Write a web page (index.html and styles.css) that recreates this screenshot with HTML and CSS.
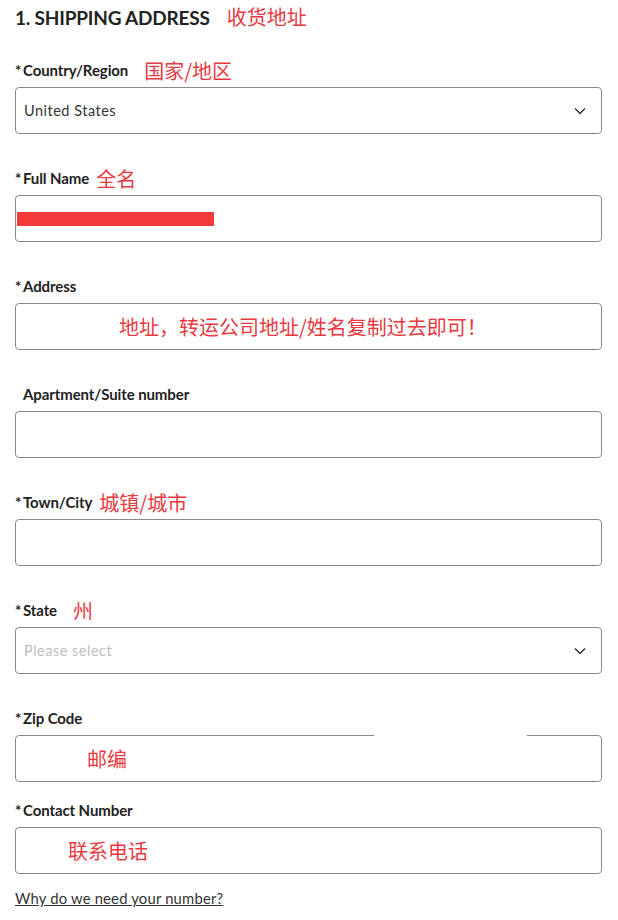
FILE: index.html
```html
<!DOCTYPE html>
<html>
<head>
<meta charset="utf-8">
<link rel="stylesheet" href="styles.css">
</head>
<body>
<div class="form">
  <div class="heading-row">
    <h2 class="heading">1. SHIPPING ADDRESS</h2>
    <span class="note note-head">收货地址</span>
  </div>

  <div class="field">
    <div class="label-row"><span class="label"><span class="star">*</span>Country/Region</span><span class="note note-country">国家/地区</span></div>
    <div class="box select"><span class="value">United States</span>
      <svg class="chev" width="12" height="8" viewBox="0 0 12 8"><path d="M1 1.5 L6 6.5 L11 1.5" fill="none" stroke="#333" stroke-width="1.5"/></svg>
    </div>
  </div>

  <div class="field">
    <div class="label-row"><span class="label"><span class="star">*</span>Full Name</span><span class="note note-name">全名</span></div>
    <div class="box"><span class="redact"></span></div>
  </div>

  <div class="field">
    <div class="label-row"><span class="label"><span class="star">*</span>Address</span></div>
    <div class="box"><span class="note note-addr">地址，转运公司地址/姓名复制过去即可！</span></div>
  </div>

  <div class="field">
    <div class="label-row"><span class="label indent">Apartment/Suite number</span></div>
    <div class="box"></div>
  </div>

  <div class="field">
    <div class="label-row"><span class="label"><span class="star">*</span>Town/City</span><span class="note note-town">城镇/城市</span></div>
    <div class="box"></div>
  </div>

  <div class="field">
    <div class="label-row"><span class="label"><span class="star">*</span>State</span><span class="note note-state">州</span></div>
    <div class="box select"><span class="value placeholder">Please select</span>
      <svg class="chev" width="12" height="8" viewBox="0 0 12 8"><path d="M1 1.5 L6 6.5 L11 1.5" fill="none" stroke="#333" stroke-width="1.5"/></svg>
    </div>
  </div>

  <div class="field field-zip">
    <div class="label-row"><span class="label"><span class="star">*</span>Zip Code</span></div>
    <div class="box zipbox"><span class="gap-mask"></span><span class="note note-zip">邮编</span></div>
  </div>

  <div class="field field-last">
    <div class="label-row"><span class="label"><span class="star">*</span>Contact Number</span></div>
    <div class="box"><span class="note note-tel">联系电话</span></div>
  </div>

  <a class="why" href="#">Why do we need your number?</a>
</div>
</body>
</html>
```

FILE: styles.css
```css
* { box-sizing: border-box; }
html, body { margin: 0; padding: 0; background: #fff; }
body {
  font-family: Lato, "Noto Sans", sans-serif;
  color: #222;
  width: 618px;
}
.form {
  padding: 6px 16px 0 15px;
  width: 618px;
}
.heading-row {
  display: flex;
  align-items: center;
  height: 22px;
  margin-bottom: 32px;
}
.heading {
  margin: 0;
  font-size: 19px;
  font-weight: 700;
  color: #222;
  letter-spacing: -0.2px;
}
.note {
  font-family: "Noto Sans CJK SC", sans-serif;
  color: #e8393f;
  font-size: 20px;
  line-height: 22px;
}
.label-row .note { position: relative; top: 1px; }
.note-head { margin-left: 17px; }
.note-country { margin-left: 16px; }
.note-name { margin-left: 7px; }
.note-town { margin-left: 7px; }
.note-state { margin-left: 16px; }

.field { margin-bottom: 34px; }
.field-zip { margin-bottom: 18px; }
.field-last { margin-bottom: 14px; }
.label-row {
  display: flex;
  align-items: center;
  height: 20px;
  margin-bottom: 7px;
}
.label {
  font-size: 15px;
  font-weight: 700;
  color: #222;
  letter-spacing: -0.1px;
}
.star { display: inline-block; width: 8px; }
.indent { padding-left: 8px; }

.box {
  position: relative;
  height: 47px;
  border: 1px solid #8a8a8a;
  border-radius: 4px;
  display: flex;
  align-items: center;
  padding: 0 15px 0 8px;
}
.select { justify-content: space-between; }
.value {
  font-size: 14.5px;
  color: #333;
  letter-spacing: 0.5px;
}
.placeholder { color: #bdbdbd; }
.chev { display: block; }

.redact {
  display: block;
  width: 197px;
  height: 14px;
  background: #f33a3a;
  margin-left: -7px;
  margin-top: 1px;
}
.note-addr { margin-left: 95px; }
.note-zip { margin-left: 63px; }
.note-tel { margin-left: 44px; }

.gap-mask {
  position: absolute;
  top: -2px;
  left: 358px;
  width: 153px;
  height: 4px;
  background: #fff;
}

.why {
  display: inline-block;
  font-size: 14.8px;
  color: #333;
  text-decoration: underline;
  letter-spacing: 0.2px;
}
```
